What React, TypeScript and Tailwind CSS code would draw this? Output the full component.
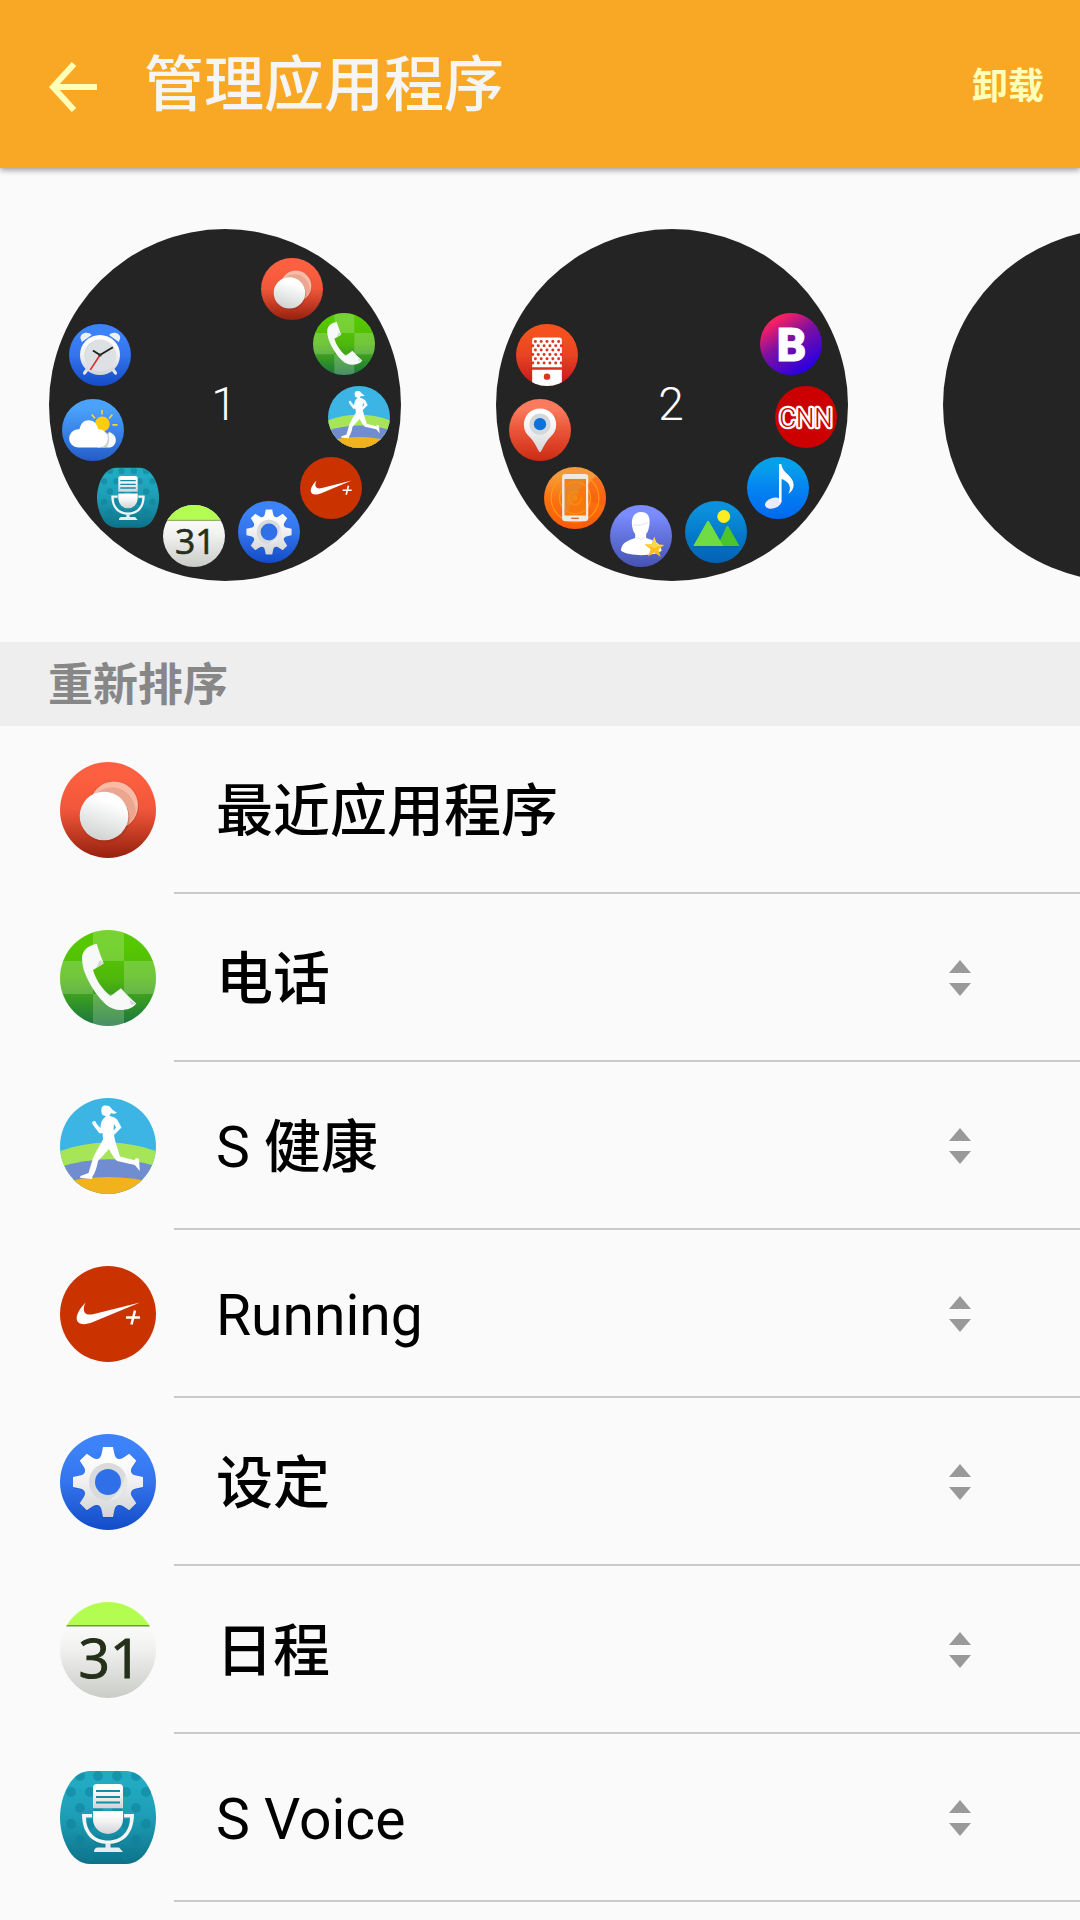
import type { ReactNode } from "react";

type IconName =
  | "recent"
  | "phone"
  | "health"
  | "running"
  | "settings"
  | "calendar"
  | "voice"
  | "weather"
  | "clock"
  | "bixby"
  | "news"
  | "music"
  | "gallery"
  | "contacts"
  | "finder"
  | "maps"
  | "recorder";

type App = {
  name: string;
  icon: IconName;
  fixed?: boolean;
};

const APPS: App[] = [
  { name: "最近应用程序", icon: "recent", fixed: true },
  { name: "电话", icon: "phone" },
  { name: "S 健康", icon: "health" },
  { name: "Running", icon: "running" },
  { name: "设定", icon: "settings" },
  { name: "日程", icon: "calendar" },
  { name: "S Voice", icon: "voice" },
];

// Slots run clockwise from the top right of the dial.
const SLOTS = [
  "left-[212px] top-[29px]",
  "left-[264px] top-[84px]",
  "left-[279px] top-[157px]",
  "left-[251px] top-[228px]",
  "left-[189px] top-[272px]",
  "left-[114px] top-[276px]",
  "left-[48px] top-[238px]",
  "left-[13px] top-[170px]",
  "left-[20px] top-[95px]",
];

const DIALS: { page: number | null; icons: (IconName | null)[] }[] = [
  {
    page: 1,
    icons: ["recent", "phone", "health", "running", "settings", "calendar", "voice", "weather", "clock"],
  },
  {
    page: 2,
    icons: [null, "bixby", "news", "music", "gallery", "contacts", "finder", "maps", "recorder"],
  },
  { page: null, icons: [] },
];

const GRADIENTS: Record<string, string[]> = {
  red: ["#fd6040", "#f0563a", "#96200e"],
  green: ["#56c800", "#4fb80c", "#1a7440"],
  blue: ["#3c82f8", "#3474ec", "#134cc8"],
  sky: ["#4aa2fa", "#3a86ea", "#245cc8"],
  paper: ["#ffffff", "#f0f0ef", "#c9ccc7"],
  metal: ["#ffffff", "#f0f0f1", "#d2d3d6"],
  teal: ["#22aac2", "#1d9db5", "#0e7288"],
  recorder: ["#f4511e", "#e84422", "#c4161c"],
  coral: ["#fb7a5e", "#ea5638", "#cc2b14"],
  orange: ["#f59a3c", "#fb7312", "#fa5a0a"],
  violet: ["#7b8cff", "#6273dc", "#4653b4"],
  ocean: ["#0a90dc", "#057ccc", "#0460b4"],
  azure: ["#06a0ea", "#0484f0", "#0068f0"],
};

function gearPath() {
  const point = (x: number, y: number, turn: number) => {
    const a = (turn * Math.PI) / 4;
    const px = 48 + x * Math.cos(a) - y * Math.sin(a);
    const py = 48 + x * Math.sin(a) + y * Math.cos(a);
    return `${px.toFixed(2)} ${py.toFixed(2)}`;
  };
  let d = `M${point(-5, -35, 0)}`;
  for (let i = 0; i < 8; i++) {
    d += `L${point(5, -35, i)}L${point(6.4, -28, i)}`;
    d += `C${point(7.5, -23, i)} ${point(-7.5, -23, i + 1)} ${point(-6.4, -28, i + 1)}`;
    d += `L${point(-5, -35, i + 1)}`;
  }
  return `${d}Z`;
}

function Disc({ fill }: { fill: string }) {
  return <circle cx="48" cy="48" r="48" fill={fill} />;
}

const GRILLE = [27, 33.7, 40.4, 47.1, 53.8, 60.5];

const ICONS: Record<IconName, ReactNode> = {
  recent: (
    <>
      <Disc fill="url(#red)" />
      <circle cx="54" cy="44" r="25" fill="#a83a22" opacity=".35" />
      <circle cx="54" cy="43.5" r="24" fill="#f9bba6" />
      <path d="M32 36c14-12 38-4 36 27 4-4 7-8 8-13C74 26 48 16 32 36z" fill="#e69c87" opacity=".7" />
      <circle cx="45" cy="56" r="24.500" fill="#8c2a18" opacity=".3" />
      <circle cx="44" cy="54" r="24.300" fill="url(#pearl)" />
    </>
  ),
  phone: (
    <>
      <Disc fill="url(#green)" />
      <g clipPath="url(#disc)" fill="#fff" opacity=".2">
        <path d="M33 0h31v31H33zM0 31h33v33H0zM64 31h32v33H64zM33 64h31v32H33z" />
      </g>
      <path
        d="M36.800 14c2 7 4.500 13 6.900 19.500L33 40c3 10 9 19 17.600 26L61 58.300C66 64 71 69 76.400 73.500 73 78 67 80 61 80c-6 0-11-2-15.600-6C38 67 32 58 28 50c-4-8-6-15-6-22 0-7 6-13 14.800-14z"
        fill="#f7f8f8"
      />
      <path d="M43.700 33 40 30l-4 8zM70 70l1 5 5-1.500z" fill="#d4d7d8" />
    </>
  ),
  health: (
    <>
      <Disc fill="#3cb5e4" />
      <g clipPath="url(#disc)">
        <path d="M0 53Q48 36 96 53V96H0z" fill="#a6e557" />
        <path d="M0 69Q48 54 96 68V96H0z" fill="#718dd2" />
        <path d="M0 85Q48 73 96 85V96H0z" fill="#f2b21b" />
      </g>
      <path
        d="M42 9c2-2 7-2 9 1 1 1.500 3 3 6 4.500-2 1.500-4 1.500-6 .5L49.500 18c4 1 7 2 8.500 5l3.500 6.500-8 8-2-2 4.500-6-2-3.500c-1 6 0 12 1.500 18L60 58.500l14.500 3.700 1.500-2.200 3 1 .8 12-5-6L57 63c-3-3-6-8-8-12L38 63c-1 6-3 12-5.500 15.500L32 81l-12-1.200L20.500 78l8-3L33 60c3-7 7-13 10-18.500L42.500 35l-3 .5L33 27l-1-3 3-1.200 2 3.400 3.500 4c0-5 1.500-9 5.500-12L42.500 17C41 14.500 41 11 42 9z"
        fill="#fff"
      />
    </>
  ),
  running: (
    <>
      <Disc fill="#ca3300" />
      <path
        d="M25.500 36.500C19.500 43 16 49 16.800 53.600c1 5.600 8.400 5.600 16.200 2.400L80 36.500 34 48c-9.500 2.500-12.500-3-8.500-11.500z"
        fill="#fff"
      />
      <path d="M66 51.500h14M75 44.500l-3.500 14" stroke="#fff" strokeWidth="2.500" />
    </>
  ),
  settings: (
    <>
      <Disc fill="url(#blue)" />
      <path d={gearPath()} fill="#0c3d9c" opacity=".3" transform="translate(0 1)" />
      <path d={gearPath()} fill="url(#metal)" />
      <circle cx="48" cy="48" r="19" fill="#d8dadc" />
      <path d="M48 67a19 19 0 0 0 17-27C64 53 56 62 48 67z" fill="#e8e9ea" />
      <circle cx="48" cy="48" r="13" fill="#2f70e8" />
    </>
  ),
  calendar: (
    <>
      <Disc fill="url(#paper)" />
      <g clipPath="url(#disc)">
        <path d="M0 0h96v23H0z" fill="#b2fd4f" />
        <path d="M0 23h96v1.500H0z" fill="#6e9a3a" />
      </g>
      <text
        x="50"
        y="76"
        textAnchor="middle"
        fontSize="55"
        fill="#25301a"
        stroke="#25301a"
        strokeWidth="1"
        className="font-['Open_Sans',sans-serif]"
      >
        31
      </text>
    </>
  ),
  voice: (
    <>
      <path
        d="M30 1h36c20 0 30 27 30 46.500S86 94 66 94H30C10 94 0 67 0 47.500S10 1 30 1z"
        fill="url(#teal)"
      />
      <g fill="#0c7f98" opacity=".5" clipPath="url(#squircle)">
        {[6, 38, 70].map((y) => (
          <g key={y}>
            <circle cx="20" cy={y} r="5" />
            <circle cx="38" cy={y} r="5" />
            <circle cx="57" cy={y} r="5" />
            <circle cx="76" cy={y} r="5" />
            <circle cx="11" cy={y + 16} r="5" />
            <circle cx="30" cy={y + 16} r="5" />
            <circle cx="66" cy={y + 16} r="5" />
            <circle cx="86" cy={y + 16} r="5" />
          </g>
        ))}
      </g>
      <path d="M33 38.300V18q0-4 4-4h22q4 0 4 4v20.300z" fill="url(#metal)" />
      <path d="M36 21h24M36 27h24M36 32.500h24" stroke="#168ba3" strokeWidth="2" />
      <path d="M33 41h30v8a15 15 0 0 1-30 0z" fill="url(#metal)" />
      <path d="M22 44h10v3.500h-6c0 14 9 23 22 23s22-9 22-23h-6V44h10c0 19-10 30-26 30S22 63 22 44z" fill="#f4f5f6" />
      <path d="M45.500 73h5v4.500H59l4 4.500H34q0-4.500 4-4.500h7.500z" fill="#e8ecee" />
    </>
  ),
  weather: (
    <>
      <Disc fill="url(#sky)" />
      <path d="M56 75h16c13 0 14-18 2-21l-14-2z" fill="#e9edf2" />
      <path d="m46 24 5 6M62 17v7M78 24l-5 6M78 40h8M73 51l4 5" stroke="#f7d33c" strokeWidth="2.500" />
      <circle cx="62.400" cy="38.700" r="11.500" fill="#ffcd0b" />
      <path d="M72 52a11.500 11.500 0 0 1 0 23z" fill="#f8f9fa" />
      <path d="M25 75a14 14 0 0 1 0-28h2c2-9 7-14 14-14 8 0 13 5 15 14a14 14 0 0 1 2 28z" fill="#fff" />
      <path d="M60 47c15 2 15 27-1 28h8c10-7 8-25-7-28z" fill="#c9cdd3" />
    </>
  ),
  clock: (
    <>
      <Disc fill="url(#blue)" />
      <path d="m30 68-6 8M66 68l6 8" stroke="#e2e4e8" strokeWidth="5" strokeLinecap="round" />
      <path d="M18 23c-2-7 7-12 15-8l2 2-15 11zM79 23c2-7-7-12-15-8l-2 2 15 11z" fill="#eef0f2" />
      <circle cx="48" cy="48" r="31" fill="url(#metal)" />
      <circle cx="48" cy="48" r="24" fill="#cfd5d7" />
      <path d="M32 66a24 24 0 0 1 34-34 24 24 0 0 1-34 34z" fill="#dde1e3" />
      <path d="m48 48 20-12M48 48l-11-7" stroke="#222" strokeWidth="3" />
      <path d="M48 48 33 71" stroke="#e2242c" strokeWidth="2.500" />
      <circle cx="48" cy="48" r="2.500" fill="#333" />
    </>
  ),
  bixby: (
    <>
      <Disc fill="url(#pink)" />
      <text
        x="49"
        y="74"
        textAnchor="middle"
        fontSize="71"
        fill="#fff"
        stroke="#fff"
        strokeWidth="1.500"
        className="font-['Roboto',sans-serif] font-black"
      >
        B
      </text>
    </>
  ),
  news: (
    <>
      <Disc fill="#cc0000" />
      <text
        x="48"
        y="63"
        textAnchor="middle"
        fontSize="40"
        fill="#cc0000"
        stroke="#fff"
        strokeWidth="7"
        strokeLinejoin="round"
        paintOrder="stroke"
        className="font-['Roboto',sans-serif] font-light"
      >
        CNN
      </text>
    </>
  ),
  music: (
    <>
      <Disc fill="url(#azure)" />
      <ellipse cx="40.500" cy="71.500" rx="13" ry="8" transform="rotate(-18 40.500 71.500)" fill="#e9eafb" />
      <path
        d="M49.500 70V11H53c1 14 19 18 19.200 32 0 6-3 11-8.200 14 7-13-2-20-10.500-23v36z"
        fill="#fff"
      />
    </>
  ),
  gallery: (
    <>
      <Disc fill="url(#ocean)" />
      <circle cx="60" cy="24" r="10" fill="#fdec22" />
      <path d="M64 40q1.500-3 3.500 0L84.500 70H50z" fill="#4cc42c" />
      <path d="M34 32q1.600-3 3.500 0L59.500 70H12.500z" fill="#70dc44" />
      <path d="M12.500 70h72v1.500h-72z" fill="#055ca6" />
    </>
  ),
  contacts: (
    <>
      <Disc fill="url(#violet)" />
      <path
        d="M17 71c0-12 10-16 22-20v-6c-3-3-4-8-5-14-1-12 4-20 14-20s15 7 13 20c-1 6-2 11-5 14v6c12 4 23 8 24 20-12 9-50 9-63 0z"
        fill="#fff"
      />
      <path d="M36 31c8 1 16 0 23-4M43 50l5 4 6-4" stroke="#dfe1ec" strokeWidth="1.500" fill="none" />
      <path d="m68.500 49.500 4.300 11.500 11 .8-8.800 7.300 3.500 11.300-9.800-6.700-10 6 4.300-11L53.500 61l11-.8z" fill="#fbbf1f" />
      <path d="m68.500 49.500 4.300 11.500 11 .8-15 5.200-15.300-6 11-.8z" fill="#fdd54a" />
    </>
  ),
  finder: (
    <>
      <Disc fill="url(#orange)" />
      <path d="M48 48 80 14A47 47 0 0 1 94 60z" fill="#fb5a10" opacity=".6" />
      <g fill="none" stroke="#ff9a0c" strokeWidth="2">
        <circle cx="48" cy="48" r="37" />
        <circle cx="48" cy="48" r="24" />
      </g>
      <rect x="28" y="11" width="40.500" height="73" rx="5" fill="#efe9e4" />
      <rect x="32" y="18.500" width="33" height="56.500" fill="#f7780f" />
      <path d="M32 75V18.500h33L48 48z" fill="#e08a38" opacity=".7" />
      <g fill="none" stroke="#ff8a08" strokeWidth="2.500">
        <path d="M54 40a10 10 0 1 0 4 8" />
        <path d="M32 30q16-13 33 0M32 66q16 13 33 0" />
      </g>
      <circle cx="48" cy="48" r="4" fill="#f58a10" />
      <path d="M42 79.500h12" stroke="#d76a20" strokeWidth="2" />
    </>
  ),
  maps: (
    <>
      <Disc fill="url(#coral)" />
      <path d="M48 82.500C45 82 42 68 30 57a25 25 0 1 1 36 0C54 68 51 82 48 82.500z" fill="url(#metal)" />
      <circle cx="48" cy="39" r="16.500" fill="#d5d8da" />
      <circle cx="48" cy="39" r="9.500" fill="#0a72dc" />
    </>
  ),
  recorder: (
    <>
      <Disc fill="url(#recorder)" />
      <g clipPath="url(#disc)">
        <path d="M25 67V25q0-4 4-4h38q4 0 4 4v42zM25 71h46v25H25z" fill="#fff" />
      </g>
      <g fill="#dc3420">
        {GRILLE.map((y, row) =>
          (row % 2 === 0 ? [30, 39, 48, 57, 66] : [26, 34.5, 43.5, 52.5, 61.5, 70]).map((x) => (
            <circle key={`${x}-${y}`} cx={x} cy={y} r="2.300" />
          )),
        )}
        <circle cx="48" cy="81.500" r="5" />
      </g>
    </>
  ),
};

function IconDefs() {
  return (
    <svg className="absolute h-0 w-0" aria-hidden="true">
      <defs>
        {Object.entries(GRADIENTS).map(([id, [top, middle, bottom]]) => (
          <linearGradient key={id} id={id} x1="0" y1="0" x2="0" y2="1">
            <stop offset="0.15" stopColor={top} />
            <stop offset="0.5" stopColor={middle} />
            <stop offset="1" stopColor={bottom} />
          </linearGradient>
        ))}
        <linearGradient id="pearl" x1="0.6" y1="0.1" x2="0.3" y2="1">
          <stop offset="0.1" stopColor="#ffffff" />
          <stop offset="1" stopColor="#cfd1d1" />
        </linearGradient>
        <linearGradient id="pink" x1="0.15" y1="0.1" x2="0.7" y2="0.95">
          <stop offset="0.05" stopColor="#ff2060" />
          <stop offset="0.45" stopColor="#8010a0" />
          <stop offset="1" stopColor="#2a00e0" />
        </linearGradient>
        <clipPath id="disc">
          <circle cx="48" cy="48" r="48" />
        </clipPath>
        <clipPath id="squircle">
          <path d="M30 1h36c20 0 30 27 30 46.500S86 94 66 94H30C10 94 0 67 0 47.500S10 1 30 1z" />
        </clipPath>
      </defs>
    </svg>
  );
}

function AppIcon({ name, className }: { name: IconName; className: string }) {
  return (
    <svg viewBox="0 0 96 96" className={className} aria-hidden="true">
      {ICONS[name]}
    </svg>
  );
}

function Dial({ page, icons }: { page: number | null; icons: (IconName | null)[] }) {
  return (
    <div className="relative flex size-[352px] shrink-0 items-center justify-center rounded-full bg-[#242424] pr-0.5 pb-0.5">
      <span className="text-[46px] leading-none font-light text-white">{page}</span>
      {icons.map((icon, i) =>
        icon ? <AppIcon key={icon} name={icon} className={`absolute size-[62px] ${SLOTS[i]}`} /> : null,
      )}
    </div>
  );
}

function AppRow({ app }: { app: App }) {
  return (
    <li className="flex h-[168px] items-center pl-[60px]">
      <AppIcon name={app.icon} className="mr-[18px] size-24 shrink-0" />
      <div className="flex h-full min-w-0 flex-1 items-center justify-between border-b-2 border-[#cacaca] pr-[108px] pl-[42px]">
        <span className="pt-1.5 text-[57px] leading-[76px] text-black">{app.name}</span>
        {!app.fixed && (
          <button type="button" aria-label={`移动 ${app.name}`} className="cursor-grab pt-0.5">
            <svg viewBox="0 0 24 36" className="h-9 w-6" fill="#999">
              <path d="M12 0l11 13H1zM12 36l11-13H1z" />
            </svg>
          </button>
        )}
      </div>
    </li>
  );
}

export default function App() {
  return (
    <div className="min-h-screen overflow-hidden bg-[#fafafa] font-['Roboto','Noto_Sans_CJK_SC',sans-serif]">
      <IconDefs />
      <header className="relative flex h-[168px] items-center bg-[#f9a825] pt-1 pr-9 pl-12 shadow-[0_2px_6px_rgba(0,0,0,0.4)]">
        <button type="button" aria-label="返回" className="mr-[46px] pt-0.5">
          <svg viewBox="0 0 50 50" className="size-[50px]" fill="none" stroke="#ffffb8" strokeWidth="6">
            <path d="M26 2 5 25l21 23M5 25h44" />
          </svg>
        </button>
        <h1 className="flex-1 text-[60px] leading-[80px] font-medium text-[#f5f5f5]">管理应用程序</h1>
        <button type="button" className="pt-0.5 text-4xl font-bold text-[#ffffb8]">
          卸载
        </button>
      </header>

      <section className="flex gap-[95px] pt-[61px] pb-[61px] pl-[49px]">
        {DIALS.map((dial, i) => (
          <Dial key={i} page={dial.page} icons={dial.icons} />
        ))}
      </section>

      <h2 className="flex h-[84px] items-center bg-[#eeeeee] pt-1 pl-12 text-[45px] leading-[60px] font-bold text-[#878787]">
        重新排序
      </h2>
      <ul className="font-['Roboto','Noto_Sans_CJK_SC_Medium','Noto_Sans_CJK_SC',sans-serif]">
        {APPS.map((app) => (
          <AppRow key={app.name} app={app} />
        ))}
      </ul>
    </div>
  );
}
